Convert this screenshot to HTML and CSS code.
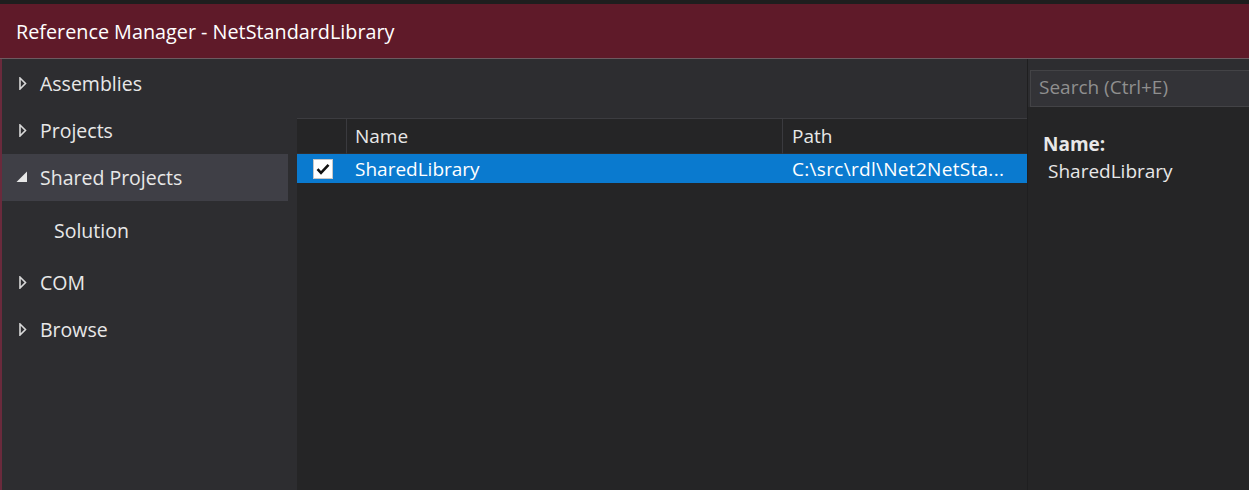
FILE: index.html
```html
<!DOCTYPE html>
<html>
<head>
<meta charset="utf-8">
<link rel="stylesheet" href="styles.css">
</head>
<body>
<div class="window">
  <div class="titlebar">Reference Manager - NetStandardLibrary</div>
  <div class="main">
    <nav class="nav">
      <div class="nav-item"><svg class="arrow" width="8" height="13" viewBox="0 0 8 13"><path d="M1 1 L6.5 6.5 L1 12 Z" fill="none" stroke="#d8d8d8" stroke-width="1.6" stroke-linejoin="miter"/></svg>Assemblies</div>
      <div class="nav-item"><svg class="arrow" width="8" height="13" viewBox="0 0 8 13"><path d="M1 1 L6.5 6.5 L1 12 Z" fill="none" stroke="#d8d8d8" stroke-width="1.6"/></svg>Projects</div>
      <div class="nav-item selected"><svg class="arrow exp" width="12" height="12" viewBox="0 0 12 12"><path d="M11 0.5 L11 11 L0.5 11 Z" fill="#e8e8e8"/></svg>Shared Projects</div>
      <div class="nav-item child">Solution</div>
      <div class="nav-item"><svg class="arrow" width="8" height="13" viewBox="0 0 8 13"><path d="M1 1 L6.5 6.5 L1 12 Z" fill="none" stroke="#d8d8d8" stroke-width="1.6"/></svg>COM</div>
      <div class="nav-item"><svg class="arrow" width="8" height="13" viewBox="0 0 8 13"><path d="M1 1 L6.5 6.5 L1 12 Z" fill="none" stroke="#d8d8d8" stroke-width="1.6"/></svg>Browse</div>
    </nav>
    <section class="center">
      <div class="list">
        <div class="row header">
          <div class="cell check-col"></div>
          <div class="cell name-col">Name</div>
          <div class="cell path-col">Path</div>
        </div>
        <div class="row item selected">
          <div class="cell check-col"><span class="checkbox"><svg width="14" height="12" viewBox="0 0 14 12"><path d="M1.5 6.2 L5 9.8 L12.5 1.8" fill="none" stroke="#111" stroke-width="2.6"/></svg></span></div>
          <div class="cell name-col">SharedLibrary</div>
          <div class="cell path-col path-text">C:\src\rdl\Net2NetSta...</div>
        </div>
      </div>
    </section>
    <aside class="side">
      <div class="search-area">
        <div class="search">Search (Ctrl+E)</div>
      </div>
      <div class="details">
        <div class="detail-label">Name:</div>
        <div class="detail-value">SharedLibrary</div>
      </div>
    </aside>
  </div>
</div>
</body>
</html>
```

FILE: styles.css
```css
* { box-sizing: border-box; }
html, body {
  margin: 0;
  padding: 0;
  background: #1e1e1e;
}
body {
  width: 1249px;
  height: 490px;
  overflow: hidden;
  font-family: "Open Sans", "Noto Sans", sans-serif;
}
.window {
  padding-top: 4px;
  height: 490px;
  display: flex;
  flex-direction: column;
}
.titlebar {
  height: 55px;
  background: #5f1a29;
  border-bottom: 1px solid #6d5a60;
  color: #ffffff;
  font-size: 19.8px;
  padding: 14px 0 0 16px;
}
.main {
  flex: 1;
  display: flex;
  border-left: 2px solid #6a2a3c;
  background: #2d2d30;
}
.nav {
  width: 286px;
  padding-top: 1px;
  background: #2d2d30;
  color: #e8e8e8;
  font-size: 19.5px;
}
.nav-item {
  height: 47px;
  display: flex;
  align-items: center;
  padding-left: 38px;
  position: relative;
}
.nav-item.selected {
  background: #3f3f46;
}
.nav-item.child {
  padding-left: 52px;
  height: 58px;
}
.arrow {
  position: absolute;
  left: 17px;
  top: 17px;
}
.arrow.exp {
  left: 14px;
  top: 17px;
}
.center {
  width: 739px;
  padding: 59px 0 0 9px;
  display: flex;
}
.list {
  flex: 1;
  background: #252526;
  border-top: 1px solid #3c3c40;
  color: #e8e8e8;
  font-size: 19px;
}
.row {
  display: flex;
}
.row.header {
  height: 35px;
}
.row.header .cell {
  border-right: 1px solid #3a3a3e;
  border-bottom: 1px solid #2e2e31;
}
.row.header .path-col {
  border-right: none;
}
.cell {
  display: flex;
  align-items: center;
  padding-left: 8px;
  white-space: nowrap;
  overflow: hidden;
}
.check-col {
  width: 50px;
  padding-left: 0;
  justify-content: center;
}
.name-col {
  width: 436px;
}
.path-col {
  flex: 1;
  padding-left: 9px;
}
.path-text {
  letter-spacing: 0.3px;
}
.row.item {
  height: 29px;
}
.row.item.selected {
  background: #0a7acf;
  color: #ffffff;
}
.checkbox {
  width: 20px;
  height: 20px;
  background: #ffffff;
  border: 1px solid #c8c8c8;
  display: flex;
  align-items: center;
  justify-content: center;
  margin-left: 1px;
}
.side {
  flex: 1;
  display: flex;
  flex-direction: column;
  border-left: 1px solid #1f1f20;
}
.search-area {
  background: #2d2d30;
  padding: 11px 0 0 2px;
  height: 48px;
}
.search {
  height: 37px;
  margin-right: -10px;
  background: #333337;
  border: 1px solid #434346;
  color: #8f8f8f;
  font-size: 19px;
  padding: 3px 0 0 8px;
}
.details {
  flex: 1;
  background: #252526;
  padding: 25px 0 0 15px;
  color: #e8e8e8;
  font-size: 19px;
}
.detail-label {
  font-weight: bold;
  line-height: 24px;
}
.detail-value {
  padding-left: 5px;
  line-height: 30px;
}
```
